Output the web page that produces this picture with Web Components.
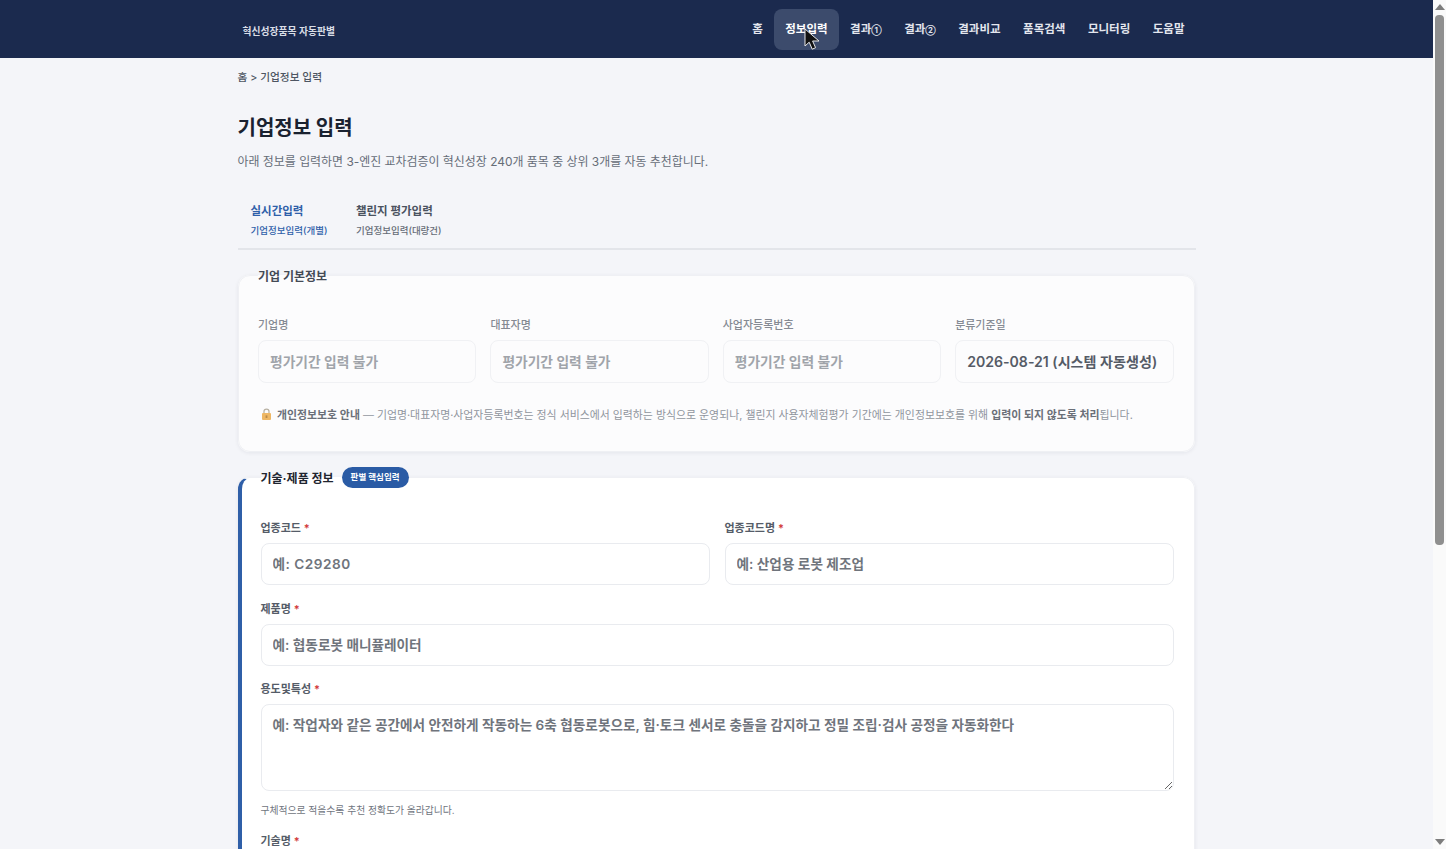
<!DOCTYPE html>
<html lang="ko">
<head>
<meta charset="utf-8">
<title>기업정보 입력</title>
<style>
html, body {
  margin: 0;
  height: 849px;
  overflow: hidden;
  background: #f4f5f9;
  font-family: Inter, "Noto Sans CJK KR", sans-serif;
}
body {
  display: flex;
}
.page {
  flex: 1;
  min-width: 0;
  height: 849px;
  overflow: hidden;
}
.content {
  width: 958px;
  margin: 0 auto;
  box-sizing: border-box;
}
</style>
</head>
<body>
<div class="page">
  <app-header brand="혁신성장품목 자동판별"></app-header>
  <div class="content">
    <app-intro></app-intro>
    <app-tabs></app-tabs>

    <app-section legend="기업 기본정보">
      <app-grid columns="4">
        <app-field size="muted" label="기업명" placeholder="평가기간 입력 불가"></app-field>
        <app-field size="muted" label="대표자명" placeholder="평가기간 입력 불가"></app-field>
        <app-field size="muted" label="사업자등록번호" placeholder="평가기간 입력 불가"></app-field>
        <app-field size="muted" label="분류기준일" value="2026-08-21 (시스템 자동생성)"></app-field>
      </app-grid>
      <app-notice></app-notice>
    </app-section>

    <app-section legend="기술·제품 정보" badge="판별 핵심입력" accent>
      <app-grid columns="2">
        <app-field label="업종코드" required placeholder="예: C29280" style="--field-spacing: 0.5px"></app-field>
        <app-field label="업종코드명" required placeholder="예: 산업용 로봇 제조업"></app-field>
      </app-grid>
      <app-field label="제품명" required placeholder="예: 협동로봇 매니퓰레이터"></app-field>
      <app-field label="용도및특성" required multiline hint="구체적으로 적을수록 추천 정확도가 올라갑니다."
        placeholder="예: 작업자와 같은 공간에서 안전하게 작동하는 6축 협동로봇으로, 힘·토크 센서로 충돌을 감지하고 정밀 조립·검사 공정을 자동화한다"></app-field>
      <app-field label="기술명" required placeholder="예: 힘·토크 센서 기반 충돌 감지 기술"></app-field>
    </app-section>
  </div>
</div>
<app-scrollbar></app-scrollbar>

<script>
const HEADER_TEMPLATE = document.createElement('template');
HEADER_TEMPLATE.innerHTML = /* html */ `
<style>
:host {
  display: block;
  background: #1b2a4e;
  height: 58px;
}
.inner {
  width: 958px;
  height: 58px;
  margin: 0 auto;
  display: flex;
  align-items: center;
  justify-content: space-between;
}
.brand {
  margin-left: 5px;
  padding-top: 3px;
  color: #d9dde6;
  font-size: 9.8px;
  font-weight: 700;
}
nav {
  display: flex;
  gap: 0.5px;
}
a {
  position: relative;
  display: block;
  padding: 0 11px;
  height: 41px;
  line-height: 40px;
  border-radius: 8px;
  color: #e3e6ee;
  font-size: 11.5px;
  font-weight: 600;
  white-space: nowrap;
}
a small {
  font-size: 7.5px;
  font-weight: 700;
}
a.active {
  background: #3c4b6c;
  color: #fff;
}
svg {
  position: absolute;
  left: 30px;
  top: 19px;
}
</style>
<div class="inner">
  <div class="brand"></div>
  <nav>
    <a>홈</a>
    <a class="active">정보입력<svg width="18" height="24" viewBox="0 0 18 24"><path d="M1 1v17l4.2-3.8 3 7 3.4-1.5-3-6.7H15z" fill="#111" stroke="#e8e8e8" stroke-width="1" stroke-linejoin="round"/></svg></a>
    <a>결과<small>①</small></a>
    <a>결과<small>②</small></a>
    <a>결과비교</a>
    <a>품목검색</a>
    <a>모니터링</a>
    <a>도움말</a>
  </nav>
</div>
`;

class AppHeaderElement extends HTMLElement {
  constructor() {
    super();
    this.attachShadow({ mode: 'open' }).appendChild(HEADER_TEMPLATE.content.cloneNode(true));
  }

  connectedCallback() {
    this.shadowRoot.querySelector('.brand').textContent = this.getAttribute('brand');
  }
}

const INTRO_TEMPLATE = document.createElement('template');
INTRO_TEMPLATE.innerHTML = /* html */ `
<style>
:host {
  display: block;
}
.crumb {
  padding-top: 12px;
  height: 16px;
  line-height: 16px;
  color: #4d5562;
  font-size: 10.7px;
  font-weight: 500;
}
h1 {
  margin: 26px 0 0;
  height: 32px;
  line-height: 32px;
  color: #1a2230;
  font-size: 20px;
  font-weight: 700;
}
p {
  margin: 8px 0 0;
  height: 20px;
  line-height: 20px;
  color: #666d78;
  font-size: 11.95px;
}
</style>
<div class="crumb">홈 &gt; 기업정보 입력</div>
<h1>기업정보 입력</h1>
<p>아래 정보를 입력하면 3-엔진 교차검증이 혁신성장 240개 품목 중 상위 3개를 자동 추천합니다.</p>
`;

class AppIntroElement extends HTMLElement {
  constructor() {
    super();
    this.attachShadow({ mode: 'open' }).appendChild(INTRO_TEMPLATE.content.cloneNode(true));
  }
}

const TABS_TEMPLATE = document.createElement('template');
TABS_TEMPLATE.innerHTML = /* html */ `
<style>
:host {
  display: flex;
  gap: 2.5px;
  margin-top: 18px;
  height: 60px;
  box-sizing: border-box;
  border-bottom: 2px solid #e3e5ea;
  margin-bottom: 14px;
}
.tab {
  padding: 12px 13px 0;
  color: #4a5260;
}
.tab span {
  color: #666c77;
}
.tab.active, .tab.active span {
  color: #2f60a9;
}
b {
  display: block;
  height: 18px;
  line-height: 18px;
  font-size: 11.5px;
  font-weight: 700;
}
span {
  display: block;
  margin-top: 2px;
  height: 17px;
  line-height: 17px;
  font-size: 9.5px;
  font-weight: 500;
}
</style>
<div class="tab active"><b>실시간입력</b><span>기업정보입력(개별)</span></div>
<div class="tab"><b>챌린지 평가입력</b><span>기업정보입력(대량건)</span></div>
`;

class AppTabsElement extends HTMLElement {
  constructor() {
    super();
    this.attachShadow({ mode: 'open' }).appendChild(TABS_TEMPLATE.content.cloneNode(true));
  }
}

const SECTION_TEMPLATE = document.createElement('template');
SECTION_TEMPLATE.innerHTML = /* html */ `
<style>
:host {
  display: block;
  margin: 0 1px 14px 0;
}
fieldset {
  margin: 0;
  min-width: 0;
  padding: 31px 20px 27px 19.5px;
  border: 1px solid #eff0f4;
  border-radius: 12px;
  background: #fcfcfd;
  box-shadow: 0 1px 4px rgb(20 30 60 / 7%);
}
legend {
  display: flex;
  align-items: center;
  gap: 8px;
  margin-left: 0;
  padding: 0;
  height: 22px;
  color: #444a55;
  font-size: 12px;
  font-weight: 700;
}
:host([accent]) fieldset {
  padding: 32px 20px 0 19px;
  background: #fff;
  border-left: 4px solid #2f5fa8;
}
:host([accent]) legend {
  color: #1f2530;
}
.badge {
  padding: 0 9px;
  height: 21px;
  line-height: 20px;
  border-radius: 11px;
  background: #2a5ba5;
  color: #fff;
  font-size: 8.5px;
  font-weight: 700;
}
.badge:empty {
  display: none;
}
</style>
<fieldset>
  <legend><span class="title"></span><span class="badge"></span></legend>
  <slot></slot>
</fieldset>
`;

class AppSectionElement extends HTMLElement {
  constructor() {
    super();
    this.attachShadow({ mode: 'open' }).appendChild(SECTION_TEMPLATE.content.cloneNode(true));
  }

  connectedCallback() {
    this.shadowRoot.querySelector('.title').textContent = this.getAttribute('legend');
    this.shadowRoot.querySelector('.badge').textContent = this.getAttribute('badge') || '';
  }
}

const GRID_TEMPLATE = document.createElement('template');
GRID_TEMPLATE.innerHTML = /* html */ `
<style>
:host {
  display: grid;
  grid-template-columns: repeat(var(--columns, 2), minmax(0, 1fr));
  gap: 15px;
}
:host([columns="4"]) {
  gap: 14px;
}
</style>
<slot></slot>
`;

class AppGridElement extends HTMLElement {
  constructor() {
    super();
    this.attachShadow({ mode: 'open' }).appendChild(GRID_TEMPLATE.content.cloneNode(true));
    this.style.setProperty('--columns', this.getAttribute('columns'));
  }
}

const FIELD_TEMPLATE = document.createElement('template');
FIELD_TEMPLATE.innerHTML = /* html */ `
<style>
:host {
  display: block;
  margin-bottom: 15.5px;
  min-width: 0;
}
:host([size="muted"]) {
  margin-bottom: 0;
}
label {
  display: block;
  height: 17px;
  line-height: 17px;
  margin-bottom: 6px;
  color: #555c68;
  font-size: 11px;
  font-weight: 600;
}
:host([size="muted"]) label {
  height: 16px;
  line-height: 16px;
  margin-bottom: 7px;
  color: #858a93;
  font-weight: 500;
}
i {
  font-style: normal;
  color: #d23a3a;
}
input, textarea {
  display: block;
  box-sizing: border-box;
  width: 100%;
  height: 42px;
  padding: 0 11px;
  border: 1px solid #e9ebef;
  border-radius: 8px;
  outline: 0;
  background: #fff;
  color: #555b66;
  font-family: inherit;
  font-size: 13.63px;
  font-weight: 600;
  letter-spacing: var(--field-spacing, 0);
}
input::placeholder, textarea::placeholder {
  color: #6f747c;
  opacity: 1;
}
:host([size="muted"]) input {
  height: 43px;
  padding-bottom: 1px;
  background: #fcfcfd;
  border-color: #f0f1f4;
  font-size: 14.1px;
}
:host([size="muted"]) input::placeholder {
  color: #a0a4aa;
  font-size: 13.75px;
}
textarea {
  height: 87px;
  padding-top: 10px;
  line-height: 20px;
  resize: vertical;
}
.hint {
  margin-top: 11px;
  height: 17px;
  line-height: 17px;
  margin-bottom: -1.5px;
  color: #6f7580;
  font-size: 9.8px;
}
.hint:empty {
  display: none;
}
</style>
<label></label>
<div class="control"></div>
<div class="hint"></div>
`;

class AppFieldElement extends HTMLElement {
  constructor() {
    super();
    this.attachShadow({ mode: 'open' }).appendChild(FIELD_TEMPLATE.content.cloneNode(true));
  }

  connectedCallback() {
    const label = this.shadowRoot.querySelector('label');
    label.textContent = this.getAttribute('label');
    if (this.hasAttribute('required')) {
      const star = document.createElement('i');
      star.textContent = ' *';
      label.appendChild(star);
    }

    const control = document.createElement(this.hasAttribute('multiline') ? 'textarea' : 'input');
    if (this.hasAttribute('placeholder')) control.placeholder = this.getAttribute('placeholder');
    if (this.hasAttribute('value')) {
      control.value = this.getAttribute('value');
      control.readOnly = true;
    }
    this.shadowRoot.querySelector('.control').appendChild(control);
    this.shadowRoot.querySelector('.hint').textContent = this.getAttribute('hint') || '';
  }
}

const NOTICE_TEMPLATE = document.createElement('template');
NOTICE_TEMPLATE.innerHTML = /* html */ `
<style>
:host {
  display: flex;
  align-items: center;
  gap: 5px;
  margin-top: 21px;
  padding-left: 3px;
  height: 20px;
  color: #90959d;
  font-size: 10.9px;
  white-space: nowrap;
}
b {
  color: #6a6f78;
  font-weight: 600;
}
svg {
  flex: none;
}
</style>
<svg width="11" height="12" viewBox="0 0 11 12">
  <path d="M3 5.5V3.6a2.5 2.5 0 0 1 5 0v1.9" fill="none" stroke="#b9b2a4" stroke-width="1.3"/>
  <rect x="1" y="5" width="9" height="7" rx="1" fill="#eeb765"/>
  <rect x="4.6" y="7.4" width="1.8" height="2.6" fill="#b98a4a"/>
</svg>
<span><b>개인정보보호 안내</b> — 기업명·대표자명·사업자등록번호는 정식 서비스에서 입력하는 방식으로 운영되나, 챌린지 사용자체험평가 기간에는 개인정보보호를 위해 <b>입력이 되지 않도록 처리</b>됩니다.</span>
`;

class AppNoticeElement extends HTMLElement {
  constructor() {
    super();
    this.attachShadow({ mode: 'open' }).appendChild(NOTICE_TEMPLATE.content.cloneNode(true));
  }
}

const SCROLLBAR_TEMPLATE = document.createElement('template');
SCROLLBAR_TEMPLATE.innerHTML = /* html */ `
<style>
:host {
  flex: none;
  display: flex;
  flex-direction: column;
  align-items: center;
  width: 13px;
  height: 849px;
  background: #fafafa;
}
.arrow {
  flex: none;
  width: 0;
  height: 0;
  border-left: 5px solid transparent;
  border-right: 5px solid transparent;
}
.up {
  margin-top: 4px;
  border-bottom: 6px solid #7d7d7d;
}
.thumb {
  flex: none;
  margin-top: 5px;
  width: 9px;
  height: 530px;
  border-radius: 4px;
  background: #8f8f8f;
}
.down {
  margin-top: auto;
  margin-bottom: 4px;
  border-top: 6px solid #7d7d7d;
}
</style>
<div class="arrow up"></div>
<div class="thumb"></div>
<div class="arrow down"></div>
`;

class AppScrollbarElement extends HTMLElement {
  constructor() {
    super();
    this.attachShadow({ mode: 'open' }).appendChild(SCROLLBAR_TEMPLATE.content.cloneNode(true));
  }
}

window.customElements.define('app-header', AppHeaderElement);
window.customElements.define('app-intro', AppIntroElement);
window.customElements.define('app-tabs', AppTabsElement);
window.customElements.define('app-section', AppSectionElement);
window.customElements.define('app-grid', AppGridElement);
window.customElements.define('app-field', AppFieldElement);
window.customElements.define('app-notice', AppNoticeElement);
window.customElements.define('app-scrollbar', AppScrollbarElement);
</script>
</body>
</html>
